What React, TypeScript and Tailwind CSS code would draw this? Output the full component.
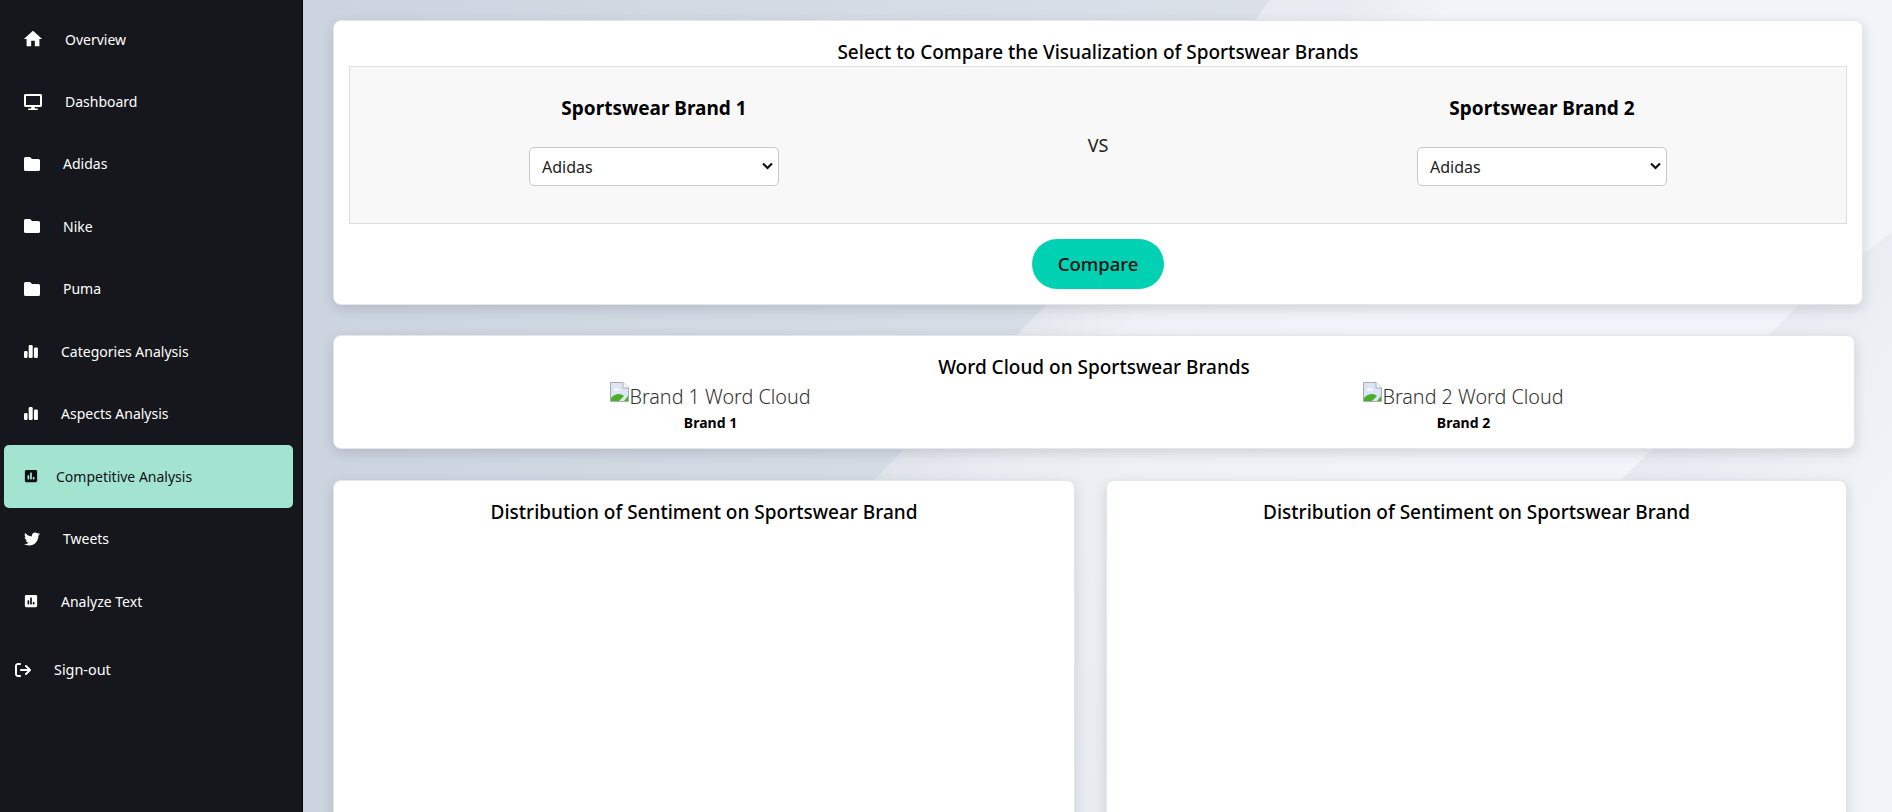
import React from "react";
import { FaDesktop, FaPoll, FaTwitter } from "react-icons/fa";
import { FaArrowRightFromBracket } from "react-icons/fa6";
import { MdHome } from "react-icons/md";

const font = "font-['Noto_Sans',sans-serif]";

const FolderIcon = () => (
  <svg width="16" height="14" viewBox="0 0 16 14" fill="currentColor">
    <path d="M1.5 0H6L8 2H14.5A1.5 1.5 0 0 1 16 3.5V12.5A1.5 1.5 0 0 1 14.5 14H1.5A1.5 1.5 0 0 1 0 12.5V1.5A1.5 1.5 0 0 1 1.5 0Z" />
  </svg>
);

const BarsIcon = () => (
  <svg width="14" height="13" viewBox="0 0 14 13" fill="currentColor">
    <rect x="0" y="6" width="3.5" height="7" rx="1.2" />
    <rect x="4.7" y="0" width="4" height="13" rx="1.2" />
    <rect x="9.9" y="2.5" width="4" height="10.5" rx="1.2" />
  </svg>
);

const navItems = [
  { label: "Overview", icon: <MdHome className="w-[22px] h-[22px] -mx-0.5" /> },
  { label: "Dashboard", icon: <FaDesktop className="w-[18px] h-[18px]" /> },
  { label: "Adidas", icon: <FolderIcon /> },
  { label: "Nike", icon: <FolderIcon /> },
  { label: "Puma", icon: <FolderIcon /> },
  { label: "Categories Analysis", icon: <BarsIcon /> },
  { label: "Aspects Analysis", icon: <BarsIcon /> },
  { label: "Competitive Analysis", icon: <FaPoll className="w-[14px] h-[14px]" />, active: true },
  { label: "Tweets", icon: <FaTwitter className="w-4 h-4" /> },
  { label: "Analyze Text", icon: <FaPoll className="w-[14px] h-[14px]" /> },
];

const Sidebar = () => (
  <aside className="w-[303px] shrink-0 h-full bg-[#15171c] border-r border-[#050505] pt-2 text-white">
    {navItems.map((item) => (
      <div
        key={item.label}
        className={
          item.active
            ? "mx-1 w-[289px] h-[63px] flex items-center pl-5 gap-[18px] rounded-[5px] bg-[#a3e4d1] text-[#0d1117]"
            : "mx-1 w-[289px] h-[62.4px] flex items-center pl-5 gap-[23px]"
        }
      >
        {item.icon}
        <span className="text-[14px]">{item.label}</span>
      </div>
    ))}
    <div className="mx-1 mt-1.5 h-[62px] flex items-center pl-[11px] gap-[23px]">
      <FaArrowRightFromBracket className="w-4 h-4 -scale-x-100 rotate-180" />
      <span className="text-[14.4px]">Sign-out</span>
    </div>
  </aside>
);

const Backdrop = () => (
  <svg className="absolute inset-0 w-full h-full" viewBox="0 0 1589 812" preserveAspectRatio="none">
    <defs>
      <linearGradient id="base" x1="0" y1="0" x2="1" y2="0">
        <stop offset="0" stopColor="#cbd4df" />
        <stop offset="0.65" stopColor="#dce1e9" />
      </linearGradient>
      <linearGradient id="shardA" gradientUnits="userSpaceOnUse" x1="560" y1="480" x2="1100" y2="300">
        <stop offset="0" stopColor="#e4e8ee" />
        <stop offset="0.5" stopColor="#eef1f5" />
        <stop offset="1" stopColor="#f1f4f8" />
      </linearGradient>
      <linearGradient id="shardShade" gradientUnits="userSpaceOnUse" x1="744" y1="304" x2="800" y2="360">
        <stop offset="0" stopColor="#d3d9e2" stopOpacity="0.3" />
        <stop offset="1" stopColor="#d3d9e2" stopOpacity="0" />
      </linearGradient>
      <linearGradient id="shardB" gradientUnits="userSpaceOnUse" x1="1330" y1="300" x2="1589" y2="480">
        <stop offset="0" stopColor="#e2e6ed" />
        <stop offset="1" stopColor="#f0f3f7" />
      </linearGradient>
    </defs>
    <rect width="1589" height="812" fill="url(#base)" />
    <polygon points="967,0 744,304 570,481 237,812 1589,812 1589,0" fill="url(#shardA)" />
    <polygon points="967,0 744,304 570,481 237,812 1589,812 1589,0" fill="url(#shardShade)" />
    <polygon points="1589,232 1497,304 1317,481 987,812 1589,812" fill="url(#shardB)" />
  </svg>
);

const BrokenImage = () => (
  <svg width="19" height="20" viewBox="0 0 19 20" className="shrink-0 self-start">
    <path d="M0.5 0.5H13L18.5 6V19.5H0.5Z" fill="#dde5f5" stroke="#a8acb3" />
    <path d="M13 0.5V6H18.5" fill="#fff" stroke="#a8acb3" />
    <path d="M4 8a2 2 0 0 1 3.5-1a2 2 0 0 1 3 1.5H4Z" fill="#fff" />
    <path d="M1 19V16C5 11 11 11 14 14L9 19Z" fill="#4caf28" />
    <path d="M14 19L18 14V19Z" fill="#4caf28" />
  </svg>
);

const card = "bg-white rounded-lg border border-[#e6e6e6] shadow-[0_4px_12px_rgba(60,70,90,0.18)]";

const BrandPicker = ({ label }: { label: string }) => (
  <div className="flex flex-col items-center pt-[26px]">
    <h3 className="h-[30px] leading-[30px] text-[19px] font-bold text-black">{label}</h3>
    <div className="relative mt-6 w-[250px] h-[39px]">
      <select className="appearance-none w-full h-full pl-3 pr-6 bg-white border border-[#c8c8c8] rounded-[5px] text-[16px] text-[#222]">
        <option>Adidas</option>
        <option>Nike</option>
        <option>Puma</option>
      </select>
      <svg
        className="absolute right-[6px] top-[15px] pointer-events-none"
        width="11"
        height="8"
        viewBox="0 0 11 8"
        fill="none"
        stroke="#111"
        strokeWidth="2.2"
      >
        <path d="M1 1.5L5.5 6L10 1.5" />
      </svg>
    </div>
  </div>
);

const WordCloud = ({ n }: { n: number }) => (
  <div className="flex flex-col items-center">
    <div className="mt-px h-[29px] flex items-center text-[19.75px] text-[#333] font-light">
      <BrokenImage />
      <span>Brand {n} Word Cloud</span>
    </div>
    <div className="mt-[2px] h-5 leading-5 text-[14px] font-bold text-black">Brand {n}</div>
  </div>
);

const App = () => (
  <div className={`flex w-full h-[812px] overflow-hidden ${font}`}>
    <Sidebar />
    <main className="relative flex-1 h-full overflow-hidden pl-[30px] pt-5">
      <Backdrop />
      <div className="relative flex flex-col gap-[30px]">
        <section className={`${card} w-[1530px] h-[285px] px-[15px] pt-[19px]`}>
          <h2 className="h-[26px] leading-6 text-center text-[19px] font-medium text-black">
            Select to Compare the Visualization of Sportswear Brands
          </h2>
          <div className="h-[158px] grid grid-cols-[608px_1fr_608px] bg-[#f8f8f8] border border-[#dedede]">
            <BrandPicker label="Sportswear Brand 1" />
            <div className="self-center text-center text-[18px] text-[#222]">VS</div>
            <BrandPicker label="Sportswear Brand 2" />
          </div>
          <div className="mt-[15px] flex justify-center">
            <button className="w-[132px] h-[50px] rounded-full bg-[#00d1b2] text-[18.5px] font-medium text-[#111]">
              Compare
            </button>
          </div>
        </section>

        <section className={`${card} w-[1522px] h-[114px] pt-[19px]`}>
          <h2 className="h-[26px] leading-6 text-center text-[19px] font-medium text-black">
            Word Cloud on Sportswear Brands
          </h2>
          <div className="grid grid-cols-[753px_753px]">
            <WordCloud n={1} />
            <WordCloud n={2} />
          </div>
        </section>

        <div className="mt-px flex gap-[31px]">
          <section className={`${card} w-[742px] h-[420px] pt-[19px]`}>
            <h2 className="leading-6 text-center text-[19px] font-medium text-black">
              Distribution of Sentiment on Sportswear Brand
            </h2>
          </section>
          <section className={`${card} w-[741px] h-[420px] pt-[19px]`}>
            <h2 className="leading-6 text-center text-[19px] font-medium text-black">
              Distribution of Sentiment on Sportswear Brand
            </h2>
          </section>
        </div>
      </div>
    </main>
  </div>
);

export default App;
